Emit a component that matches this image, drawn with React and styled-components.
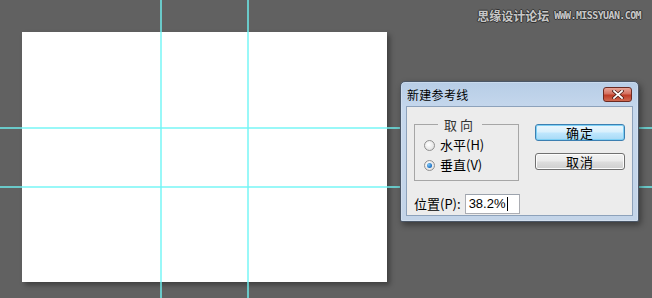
import React from "react";
import styled, { createGlobalStyle } from "styled-components";

const Global = createGlobalStyle`
  html, body { margin: 0; padding: 0; background: #616161; }
  body { font-family: "Noto Sans CJK SC", "Liberation Sans", sans-serif; }
`;

const Workspace = styled.div`
  position: relative;
  width: 652px;
  height: 298px;
  overflow: hidden;
  background: #616161;
  padding: 32px 0 0 22px;
  box-sizing: border-box;
`;

const Canvas = styled.div`
  width: 365px;
  height: 250px;
  background: #ffffff;
  box-shadow: 3px 3px 5px rgba(0, 0, 0, 0.35);
`;

const Guide = styled.div`
  position: absolute;
  background: rgba(110, 245, 245, 0.7);
  ${(p) =>
    p.$vertical
      ? `left: ${p.$at}px; top: 0; width: 2px; height: 100%;`
      : `top: ${p.$at}px; left: 0; height: 2px; width: 100%;`}
`;

const Watermark = styled.div`
  position: absolute;
  top: 7px;
  right: 11px;
  display: flex;
  align-items: center;
  gap: 5px;
  color: #c8c8c8;
  text-shadow: -1px 0 #333, 1px 0 #333, 0 -1px #333, 0 1px #333;
`;

const WmCn = styled.span`
  font-family: "Noto Sans CJK SC", sans-serif;
  font-size: 12px;
  font-weight: 700;
`;

const WmUrl = styled.span`
  font-family: "DejaVu Sans Mono", "Liberation Mono", monospace;
  font-size: 10px;
  font-weight: 700;
  letter-spacing: -0.6px;
`;

const Dialog = styled.div`
  position: absolute;
  left: 400px;
  top: 81px;
  width: 239px;
  height: 141px;
  box-sizing: border-box;
  border: 1px solid #4a5666;
  border-radius: 5px 5px 2px 2px;
  background: linear-gradient(180deg, #b7cde6 0%, #c6d8ed 20%, #c3d4e8 100%);
  box-shadow: 0 0 0 1px rgba(255, 255, 255, 0.25) inset, 2px 3px 6px rgba(0, 0, 0, 0.4);
  display: flex;
  flex-direction: column;
  padding: 0 5px 5px 5px;
`;

const TitleBar = styled.div`
  height: 24px;
  display: flex;
  align-items: center;
  justify-content: space-between;
  padding-left: 1px;
`;

const Title = styled.span`
  font-size: 12px;
  color: #000;
  letter-spacing: 0.3px;
  padding-top: 1px;
`;

const CloseBtn = styled.div`
  width: 29px;
  height: 15px;
  margin-top: 1px;
  margin-right: 1px;
  box-sizing: border-box;
  border: 1px solid #6b2a22;
  border-radius: 3px;
  background: linear-gradient(180deg, #e8a598 0%, #d4705f 45%, #bf3c27 55%, #cf6a52 100%);
  display: flex;
  align-items: center;
  justify-content: center;
`;

const Body = styled.div`
  flex: 1;
  background: #ececec;
  border: 1px solid #8da2bb;
  display: grid;
  grid-template-columns: 105px 1fr;
  grid-template-rows: auto auto;
  column-gap: 16px;
  padding: 11px 8px 0 7px;
  box-sizing: border-box;
`;

const Group = styled.fieldset`
  margin: 0;
  padding: 6px 0 0 9px;
  height: 63px;
  box-sizing: border-box;
  border: 1px solid #a6a6a6;
  display: flex;
  flex-direction: column;
  gap: 4px;
`;

const Legend = styled.legend`
  font-size: 13px;
  padding: 0 6px;
  margin-left: 14px;
  color: #333;
  line-height: 13px;
  letter-spacing: 3px;
`;

const RadioRow = styled.label`
  display: flex;
  align-items: center;
  gap: 5px;
  font-size: 13px;
  line-height: 16px;
  color: #000;
`;

const Radio = styled.span`
  width: 11px;
  height: 11px;
  border-radius: 50%;
  box-sizing: border-box;
  border: 1px solid #8f8f8f;
  background: radial-gradient(circle at 40% 40%, #ffffff 0%, #e4e4e4 70%, #d0d0d0 100%);
  display: flex;
  align-items: center;
  justify-content: center;
  &::after {
    content: "";
    display: ${(p) => (p.$checked ? "block" : "none")};
    width: 5px;
    height: 5px;
    border-radius: 50%;
    background: radial-gradient(circle at 35% 35%, #7fc6f5 0%, #1a6fc2 70%, #0b4d93 100%);
  }
`;

const Buttons = styled.div`
  display: flex;
  flex-direction: column;
  gap: 12px;
  padding-top: 6px;
`;

const Btn = styled.div`
  width: 90px;
  height: 17px;
  box-sizing: border-box;
  border: 1px solid ${(p) => (p.$default ? "#3c7fb1" : "#707070")};
  border-radius: 3px;
  background: ${(p) =>
    p.$default
      ? "linear-gradient(180deg, #eaf6fd 0%, #d9f0fc 45%, #bee6fd 55%, #a7d9f5 100%)"
      : "linear-gradient(180deg, #f2f2f2 0%, #ebebeb 45%, #dddddd 55%, #cfcfcf 100%)"};
  box-shadow: ${(p) => (p.$default ? "0 0 0 1px #7ed0f5 inset" : "0 0 0 1px #fcfcfc inset")};
  display: flex;
  align-items: center;
  justify-content: center;
  font-size: 13px;
  color: #000;
  letter-spacing: 1px;
`;

const PosRow = styled.div`
  grid-column: 1 / 3;
  display: flex;
  align-items: center;
  gap: 4px;
  margin-top: 8px;
  font-size: 13px;
  color: #000;
`;

const Input = styled.div`
  width: 55px;
  height: 20px;
  box-sizing: border-box;
  border: 1px solid #abadb3;
  border-top-color: #9ca3ad;
  background: #fff;
  display: flex;
  align-items: center;
  padding-left: 3px;
  font-family: "Liberation Sans", sans-serif;
  font-size: 13px;
`;

const Caret = styled.span`
  display: inline-block;
  width: 1px;
  height: 14px;
  background: #000;
  margin-left: 1px;
`;

export default function App() {
  return (
    <>
      <Global />
      <Workspace>
        <Canvas />
        <Guide $vertical $at={160} />
        <Guide $vertical $at={247} />
        <Guide $at={127} />
        <Guide $at={186} />
        <Watermark>
          <WmCn>思缘设计论坛</WmCn>
          <WmUrl>WWW.MISSYUAN.COM</WmUrl>
        </Watermark>
        <Dialog>
          <TitleBar>
            <Title>新建参考线</Title>
            <CloseBtn>
              <svg width="12" height="9" viewBox="0 0 12 9">
                <path d="M2 1 L10 8 M10 1 L2 8" stroke="#4a1a14" strokeWidth="3.2" strokeLinecap="square" />
                <path d="M2 1 L10 8 M10 1 L2 8" stroke="#ffffff" strokeWidth="1.8" strokeLinecap="square" />
              </svg>
            </CloseBtn>
          </TitleBar>
          <Body>
            <Group>
              <Legend>取向</Legend>
              <RadioRow>
                <Radio />
                水平(H)
              </RadioRow>
              <RadioRow>
                <Radio $checked />
                垂直(V)
              </RadioRow>
            </Group>
            <Buttons>
              <Btn $default>确定</Btn>
              <Btn>取消</Btn>
            </Buttons>
            <PosRow>
              位置(P):
              <Input>
                38.2%
                <Caret />
              </Input>
            </PosRow>
          </Body>
        </Dialog>
      </Workspace>
    </>
  );
}
